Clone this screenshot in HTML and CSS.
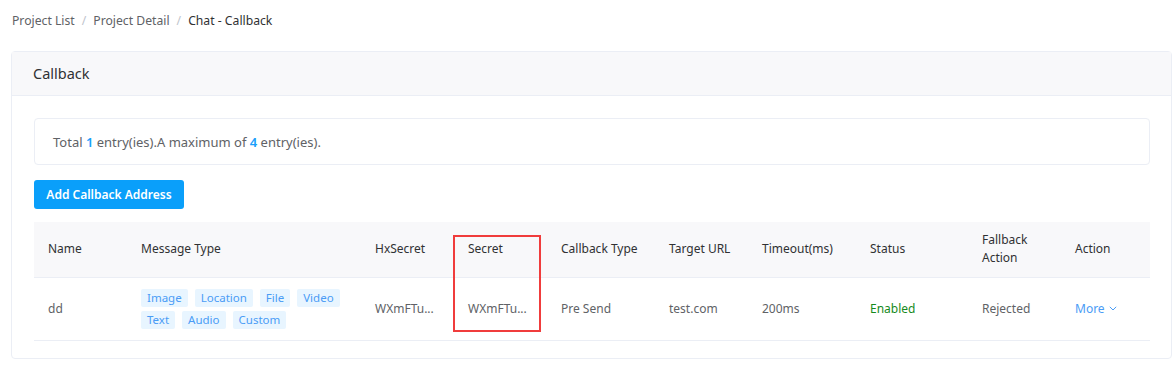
FILE: index.html
```html
<!DOCTYPE html>
<html lang="en">
<head>
  <meta charset="UTF-8" />
  <title>Chat - Callback</title>
  <link rel="stylesheet" href="styles.css">
</head>
<body>

<div class="page">
  <div class="breadcrumb">
    <span class="crumb">Project List</span>
    <span class="sep">/</span>
    <span class="crumb">Project Detail</span>
    <span class="sep">/</span>
    <span class="crumb current">Chat - Callback</span>
  </div>

  <div class="card">
    <div class="card-header">Callback</div>
    <div class="card-body">
      <div class="summary">
        Total <b>1</b> entry(ies).A maximum of <b>4</b> entry(ies).
      </div>

      <button class="btn-primary">Add Callback Address</button>

      <table class="grid">
        <colgroup>
          <col style="width:93px">
          <col style="width:234px">
          <col style="width:93px">
          <col style="width:93px">
          <col style="width:108px">
          <col style="width:93px">
          <col style="width:108px">
          <col style="width:112px">
          <col style="width:93px">
          <col>
        </colgroup>
        <thead>
          <tr>
            <th>Name</th>
            <th>Message Type</th>
            <th>HxSecret</th>
            <th>Secret</th>
            <th>Callback Type</th>
            <th>Target URL</th>
            <th>Timeout(ms)</th>
            <th>Status</th>
            <th>Fallback<br>Action</th>
            <th>Action</th>
          </tr>
        </thead>
        <tbody>
          <tr>
            <td>dd</td>
            <td>
              <div class="tags">
                <span class="tag">Image</span>
                <span class="tag">Location</span>
                <span class="tag">File</span>
                <span class="tag">Video</span>
                <span class="tag">Text</span>
                <span class="tag">Audio</span>
                <span class="tag">Custom</span>
              </div>
            </td>
            <td>WXmFTu...</td>
            <td>WXmFTu...</td>
            <td>Pre Send</td>
            <td>test.com</td>
            <td>200ms</td>
            <td class="ok">Enabled</td>
            <td>Rejected</td>
            <td>
              <a class="more">More
                <svg width="8" height="5" viewBox="0 0 8 5"><path d="M0.8 0.8l3.2 3.2 3.2-3.2" fill="none" stroke="currentColor" stroke-width="1"/></svg>
              </a>
            </td>
          </tr>
        </tbody>
      </table>
      <div class="highlight"></div>
    </div>
  </div>
</div>

</body>
</html>
```

FILE: styles.css
```css
* {
  box-sizing: border-box;
}

body {
  margin: 0;
  background: #fff;
  font-family: 'Noto Sans', 'Open Sans', sans-serif;
  font-size: 12px;
  color: #606266;
}

.page {
  padding: 9px 2px 0 11px;
}

.breadcrumb {
  display: flex;
  align-items: center;
  gap: 7px;
  padding-left: 1px;
  height: 22px;
  margin-bottom: 20px;
  font-size: 12.2px;
}

.crumb {
  color: #606266;
}

.crumb.current {
  color: #303133;
}

.sep {
  color: #c0c4cc;
}

.card {
  border: 1px solid #ebeef5;
  border-radius: 4px;
  background: #fff;
}

.card-header {
  height: 44px;
  line-height: 43px;
  padding-left: 21px;
  background: #f8f8fa;
  border-bottom: 1px solid #ebeef5;
  font-size: 14.5px;
  color: #303133;
}

.card-body {
  position: relative;
  padding: 22px 21px 17px 22px;
}

.summary {
  height: 47px;
  line-height: 47px;
  border: 1px solid #ebeef5;
  border-radius: 4px;
  padding-left: 18px;
  font-size: 13px;
  color: #606266;
}

.summary b {
  color: #1a9ffb;
  font-weight: 600;
}

.btn-primary {
  display: block;
  margin-top: 15px;
  width: 150px;
  height: 29px;
  border: none;
  border-radius: 3px;
  background: #0a9ffa;
  color: #fff;
  font-family: inherit;
  font-size: 12px;
  font-weight: 600;
  cursor: pointer;
}

.grid {
  margin-top: 13px;
  width: 100%;
  border-collapse: collapse;
  table-layout: fixed;
}

.grid th {
  background: #f8f8fa;
  height: 55px;
  text-align: left;
  font-weight: normal;
  color: #303133;
  padding: 0 14px;
  line-height: 18px;
  border-bottom: 1px solid #ebeef5;
}

.grid td {
  height: 63px;
  padding: 0 14px;
  border-bottom: 1px solid #ebeef5;
  color: #606266;
}

.tags {
  display: flex;
  flex-wrap: wrap;
  gap: 4px 7px;
  padding-top: 1px;
}

.tag {
  height: 18px;
  line-height: 18px;
  padding: 0 6px;
  border-radius: 2px;
  background: #e8f5ff;
  color: #4a9cf6;
  font-size: 11.5px;
}

.grid td.ok {
  color: #168a1c;
}

.more {
  color: #4a9cf6;
  cursor: pointer;
}

.more svg {
  vertical-align: 2px;
  margin-left: 1px;
}

.highlight {
  position: absolute;
  left: 441px;
  top: 139px;
  width: 88px;
  height: 97px;
  border: 2px solid #f03c3c;
  pointer-events: none;
}
```
